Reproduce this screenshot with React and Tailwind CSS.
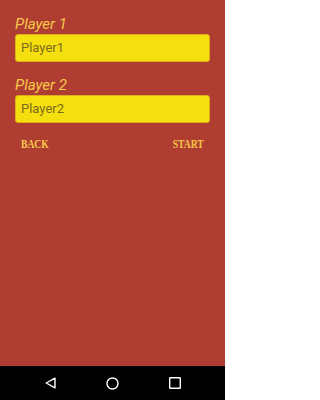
export default function App() {
  return (
    <div className="w-[225px] h-[400px] flex flex-col bg-[#b03d31] font-['Roboto',sans-serif]">
      <div className="flex-1 flex flex-col px-[15px] pt-[14px]">
        {/* Player 1 */}
        <label className="italic text-[15px] leading-[20px] text-[#f6c94a]">Player 1</label>
        <div className="h-[28px] rounded-[3px] bg-[#f5df0e] border border-[#dcae1c] flex items-center px-[5px]">
          <span className="text-[13px] text-[#7d6a1d]">Player1</span>
        </div>

        {/* Player 2 */}
        <label className="mt-[13px] italic text-[15px] leading-[20px] text-[#f6c94a]">Player 2</label>
        <div className="h-[28px] rounded-[3px] bg-[#f5df0e] border border-[#dcae1c] flex items-center px-[5px]">
          <span className="text-[13px] text-[#7d6a1d]">Player2</span>
        </div>

        <div className="mt-[12px] flex justify-between px-[6px]">
          <span className="inline-block origin-left scale-x-80 font-['Liberation_Serif',serif] font-bold text-[12px] text-[#f6c94a]">BACK</span>
          <span className="inline-block origin-right scale-x-80 font-['Liberation_Serif',serif] font-bold text-[12px] text-[#f6c94a]">START</span>
        </div>
      </div>

      {/* Android nav bar */}
      <div className="h-[34px] bg-black flex items-center justify-center gap-[50px]">
        <svg width="11" height="12" viewBox="0 0 11 12" fill="none" stroke="white" strokeWidth="1.4" strokeLinejoin="round">
          <path d="M10 1.2 L1.2 6 L10 10.8 Z" />
        </svg>
        <svg width="13" height="13" viewBox="0 0 13 13" fill="none" stroke="white" strokeWidth="1.4">
          <circle cx="6.5" cy="6.5" r="5.5" />
        </svg>
        <svg width="12" height="12" viewBox="0 0 12 12" fill="none" stroke="white" strokeWidth="1.4">
          <rect x="0.7" y="0.7" width="10.6" height="10.6" rx="0.5" />
        </svg>
      </div>
    </div>
  )
}
